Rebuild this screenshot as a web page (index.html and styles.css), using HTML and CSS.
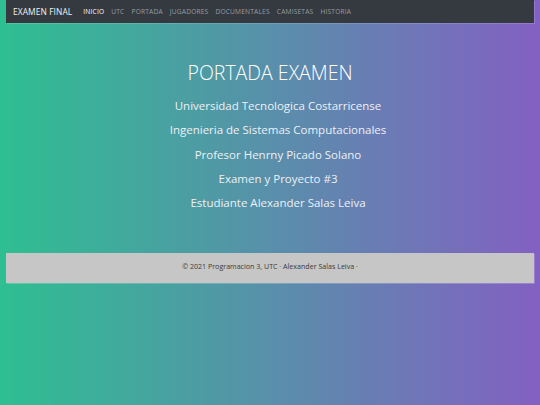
FILE: index.html
```
<!DOCTYPE html>
<html lang="es">
<head>
<meta charset="utf-8">
<title>Examen Final</title>
<link rel="stylesheet" href="styles.css">
</head>
<body>
<div class="page">
  <nav class="navbar">
    <span class="brand">EXAMEN FINAL</span>
    <ul class="links">
      <li class="active">INICIO</li>
      <li>UTC</li>
      <li>PORTADA</li>
      <li>JUGADORES</li>
      <li>DOCUMENTALES</li>
      <li>CAMISETAS</li>
      <li>HISTORIA</li>
    </ul>
  </nav>
  <main class="hero">
    <h1 class="title">PORTADA EXAMEN</h1>
    <div class="lines">
      <p class="line">Universidad Tecnologica Costarricense</p>
      <p class="line">Ingenieria de Sistemas Computacionales</p>
      <p class="line">Profesor Henrny Picado Solano</p>
      <p class="line">Examen y Proyecto #3</p>
      <p class="line">Estudiante Alexander Salas Leiva</p>
    </div>
  </main>
  <footer class="footer">© 2021 Programacion 3, UTC · Alexander Salas Leiva ·</footer>
</div>
</body>
</html>
```
FILE: styles.css
```
html, body {
  margin: 0;
  padding: 0;
  height: 100%;
}
body {
  background: linear-gradient(to right, #2ebf91, #8360c3);
  font-family: "Open Sans", "Liberation Sans", sans-serif;
}
.page {
  padding: 0 6px;
}
.navbar {
  height: 23px;
  background: #343a40;
  display: flex;
  align-items: center;
  padding: 0 7px;
  box-shadow: 1px 1px 0 rgba(255,255,255,0.15);
}
.brand {
  color: #f2f2f2;
  font-size: 8.4px;
  letter-spacing: 0.1px;
  margin-right: 11px;
}
.links {
  list-style: none;
  margin: 0;
  padding: 0;
  display: flex;
  gap: 7px;
}
.links li {
  color: #9a9da1;
  font-size: 6.6px;
  letter-spacing: 0.2px;
}
.links li.active {
  color: #ffffff;
}
.hero {
  text-align: center;
  padding-top: 38px;
  height: 192px;
  box-sizing: border-box;
  margin-bottom: 38px;
}
.title {
  margin: 0 0 9px;
  font-weight: 300;
  font-size: 19.5px;
  line-height: 24px;
  color: #ffffff;
}
.lines {
  padding-left: 16px;
}
.line {
  margin: 0;
  font-size: 11.5px;
  line-height: 24.25px;
  color: #eef0f6;
}
.footer {
  background: #c6c6c6;
  height: 30px;
  box-sizing: border-box;
  padding-bottom: 5px;
  display: flex;
  align-items: center;
  justify-content: center;
  font-size: 7.1px;
  color: #3a3a3a;
  box-shadow: 1px 1px 0 rgba(255,255,255,0.2);
}
```
